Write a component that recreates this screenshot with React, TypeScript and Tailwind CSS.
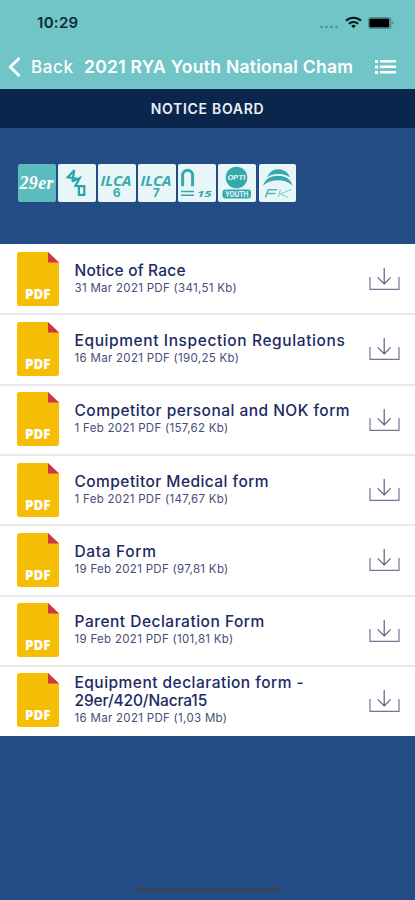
import { ReactNode } from "react";

const documents = [
  {
    title: [{ text: "Notice of Race", tracking: "tracking-[0.18px]" }],
    info: "31 Mar 2021 PDF (341,51 Kb)",
  },
  {
    title: [{ text: "Equipment Inspection Regulations", tracking: "tracking-[0.6px]" }],
    info: "16 Mar 2021 PDF (190,25 Kb)",
  },
  {
    title: [{ text: "Competitor personal and NOK form", tracking: "tracking-[0.47px]" }],
    info: "1 Feb 2021 PDF (157,62 Kb)",
  },
  {
    title: [{ text: "Competitor Medical form", tracking: "tracking-[0.44px]" }],
    info: "1 Feb 2021 PDF (147,67 Kb)",
  },
  {
    title: [{ text: "Data Form", tracking: "tracking-[0.66px]" }],
    info: "19 Feb 2021 PDF (97,81 Kb)",
  },
  {
    title: [{ text: "Parent Declaration Form", tracking: "tracking-[0.5px]" }],
    info: "19 Feb 2021 PDF (101,81 Kb)",
  },
  {
    title: [
      { text: "Equipment declaration form -", tracking: "tracking-[0.47px]" },
      { text: "29er/420/Nacra15", tracking: "tracking-[-0.13px]" },
    ],
    info: "16 Mar 2021 PDF (1,03 Mb)",
  },
];

function StatusBar() {
  return (
    <div className="flex h-[46px] items-center justify-between pl-[37px] pr-[21px]">
      <span className="text-[15px] font-semibold tracking-[0.3px] text-[#0c2b35]">10:29</span>
      <svg width="75" height="16" viewBox="0 0 75 16" fill="none">
        <g fill="#4a8f94">
          <circle cx="2.5" cy="12" r="1.3" />
          <circle cx="7.5" cy="12" r="1.3" />
          <circle cx="12.5" cy="12" r="1.3" />
          <circle cx="17.5" cy="12" r="1.3" />
        </g>
        <g stroke="#06191d" strokeWidth="2">
          <path d="M27 5.8a11 11 0 0 1 15 0" />
          <path d="M29.8 8.7a7 7 0 0 1 9.4 0" />
        </g>
        <path d="M34.5 13.3l-2.4-2.5a3.5 3.5 0 0 1 4.8 0z" fill="#06191d" />
        <rect x="49" y="2" width="23.5" height="12" rx="3" fill="#4f9294" />
        <rect x="50.5" y="3.7" width="19.5" height="8.6" rx="1" fill="#000" />
        <path d="M73.3 5.8q1.7.3 1.7 2t-1.7 2z" fill="#4f9294" />
      </svg>
    </div>
  );
}

function NavBar() {
  return (
    <div className="flex h-[43px] items-center whitespace-nowrap pl-2 pr-[19px] text-white">
      <svg width="13" height="20" viewBox="0 0 13 20" fill="none" className="mb-[2px] shrink-0">
        <path d="M11.5 1L2.3 10l9.2 9" stroke="#fff" strokeWidth="2.8" />
      </svg>
      <span className="ml-[10px] w-[53px] text-[17px] font-medium tracking-[0.6px]">Back</span>
      <h1 className="text-[17.5px] font-semibold tracking-[0.27px]">
        2021 RYA Youth National Cham
      </h1>
      <svg width="21" height="14" viewBox="0 0 21 14" fill="#fff" className="mb-[2px] ml-auto shrink-0">
        <path d="M0 0h3v3H0zM5 0h16v2.6H5zM0 5.5h3v3H0zM5 5.5h16v2.6H5zM0 11h3v3H0zM5 11h16v2.6H5z" />
      </svg>
    </div>
  );
}

function Tile({ active, children }: { active?: boolean; children: ReactNode }) {
  return (
    <svg
      width="37.5"
      height="38"
      viewBox="0 0 37.5 38"
      fill="none"
      className={active ? "rounded-[2px] bg-[#5bbcbd]" : "rounded-[2px] bg-[#e8f6f8]"}
    >
      {children}
    </svg>
  );
}

function IlcaTile({ number }: { number: string }) {
  return (
    <Tile>
      <g fill="#36aaae" fontWeight="700">
        <text
          x="2.5"
          y="22"
          fontFamily="Open Sans, sans-serif"
          fontSize="14.5"
          fontStyle="italic"
          textLength="31"
          lengthAdjust="spacingAndGlyphs"
        >
          ILCA
        </text>
        <text x="14.7" y="33.3" fontSize="12" fontFamily="Inter, sans-serif">
          {number}
        </text>
      </g>
    </Tile>
  );
}

function BoatClasses() {
  return (
    <div className="flex gap-[2.6px] pl-[18px] pt-9">
      <Tile active>
        <text
          x="1.5"
          y="25"
          fill="#fff"
          fontFamily="Liberation Serif, serif"
          fontSize="18"
          fontWeight="700"
          fontStyle="italic"
          textLength="34"
        >
          29er
        </text>
      </Tile>
      <Tile>
        <g stroke="#28a5aa" strokeWidth="2.2">
          <path d="M16.6 6L9.8 13.3l9 1.4M16.3 6.2l-2 11.3" />
          <path d="M14.3 17.5l7.4-3.4-4.2 7.7 7 .4" />
          <path d="M20.9 22.2h5.4v8.6h-5.4z" />
        </g>
      </Tile>
      <IlcaTile number="6" />
      <IlcaTile number="7" />
      <Tile>
        <path d="M4.6 22.3v-11a5 5 0 0 1 10 0v11" stroke="#34a8ac" strokeWidth="3" />
        <path d="M3 27.5h13M3 31.3h13" stroke="#34a8ac" strokeWidth="1.4" />
        <text
          x="19"
          y="32.5"
          fill="#34a8ac"
          fontFamily="Open Sans, sans-serif"
          fontSize="9.5"
          fontWeight="700"
          fontStyle="italic"
          textLength="14.5"
          lengthAdjust="spacingAndGlyphs"
        >
          15
        </text>
      </Tile>
      <Tile>
        <circle cx="18.5" cy="13.5" r="10.8" fill="#34a8ac" />
        <rect x="4.5" y="25.5" width="28.5" height="9" rx="3" fill="#34a8ac" />
        <g fill="#e8f6f8" fontFamily="Inter, sans-serif" fontWeight="700">
          <text
            x="9.5"
            y="16"
            fontSize="5.5"
            fontStyle="italic"
            textLength="18"
            lengthAdjust="spacingAndGlyphs"
          >
            OPTI
          </text>
          <text x="7" y="32.7" fontSize="7.5" textLength="23.5" lengthAdjust="spacingAndGlyphs">
            YOUTH
          </text>
        </g>
      </Tile>
      <Tile>
        <path
          d="M8 13.5C10.5 7.6 15 4.7 20 5.3c6 .7 9.3 3.7 11 8.2-3.6-2.4-7-3.3-11-3.4-5-.1-8.6.8-12 3.4z"
          fill="#34a8ac"
        />
        <path
          d="M4.2 21.5c1.5-6.2 7-9.8 14.8-9.8 7.6 0 12.8 3.4 14.5 9.8-4.2-3.8-8.8-5.2-14.5-5.2s-10.4 1.4-14.8 5.2z"
          fill="#34a8ac"
        />
        <path d="M6.5 33.5l2.7-7.7h9M7.5 29.6h9" stroke="#55b7ba" strokeWidth="1.5" />
        <path d="M21.5 25.5l-2.4 8M32 25.5l-10.5 4.2 7.5 3.8" stroke="#8ccdd0" strokeWidth="1.1" />
      </Tile>
    </div>
  );
}

function PdfIcon() {
  return (
    <svg width="42" height="54" viewBox="0 0 42 54" className="shrink-0">
      <path
        d="M2.5 0H31l11 10.5v41q0 2.5-2.5 2.5h-37Q0 54 0 51.5v-49Q0 0 2.5 0z"
        fill="#f5be05"
      />
      <path d="M31 0l11 10.5H31z" fill="#cf3548" />
      <text
        x="8"
        y="47.3"
        fill="#fff"
        fontFamily="Open Sans, sans-serif"
        fontSize="14"
        fontWeight="800"
        textLength="25.5"
        lengthAdjust="spacingAndGlyphs"
      >
        PDF
      </text>
    </svg>
  );
}

function DownloadIcon() {
  return (
    <svg
      width="31"
      height="23"
      viewBox="0 0 31 23"
      fill="none"
      stroke="#737794"
      strokeWidth="1.2"
      className="ml-auto mt-[2px] shrink-0"
    >
      <path d="M1 9v12.3h29V9" />
      <path d="M15.2 0v15.6M8.7 9.3l6.5 6.5 6.5-6.5" stroke="#5b6083" />
    </svg>
  );
}

type Line = { text: string; tracking: string };

function DocumentRow({ title, info }: { title: Line[]; info: string }) {
  return (
    <li className="flex h-[70.35px] items-center border-t-2 border-[#e9e9eb] pb-px pl-[16.5px] pr-[15px] first:h-[69.7px] first:border-white last:h-[71px] last:pb-[2px]">
      <PdfIcon />
      <div className="ml-[16px] whitespace-nowrap">
        {title.map(({ text, tracking }) => (
          <p key={text} className={`text-[15.5px] font-medium leading-[18px] text-[#1c2a63] ${tracking}`}>
            {text}
          </p>
        ))}
        <p className="text-[11.5px] leading-4 tracking-[0.3px] text-[#474d78]">{info}</p>
      </div>
      <DownloadIcon />
    </li>
  );
}

export default function App() {
  return (
    <div className="flex h-[900px] w-[415px] flex-col overflow-hidden bg-[#244d85] font-['Inter',sans-serif]">
      <header className="h-[89px] shrink-0 bg-[#72c5c7]">
        <StatusBar />
        <NavBar />
      </header>
      <h2 className="flex h-[39px] shrink-0 items-center justify-center bg-[#0b264d] text-[14px] font-semibold tracking-[0.7px] text-[#eceff5]">
        NOTICE BOARD
      </h2>
      <div className="h-[115.5px] shrink-0">
        <BoatClasses />
      </div>
      <ul className="bg-white">
        {documents.map((doc) => (
          <DocumentRow key={doc.info} {...doc} />
        ))}
      </ul>
      <div className="mx-auto mb-[8px] mt-auto h-[4px] w-[148px] rounded-full bg-[#34445a]" />
    </div>
  );
}
